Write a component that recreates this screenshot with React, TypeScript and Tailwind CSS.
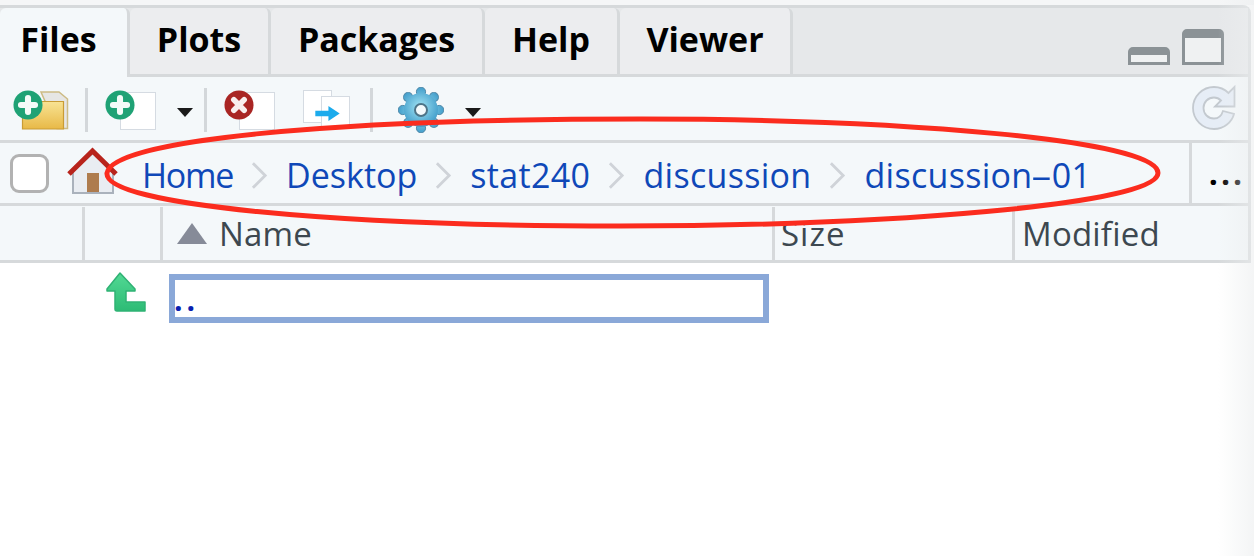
const tabs = [
  { label: "Files", width: "w-[130px] pr-[10px]", active: true },
  { label: "Plots", width: "w-[141px]" },
  { label: "Packages", width: "w-[214px]" },
  { label: "Help", width: "w-[135px]" },
  { label: "Viewer", width: "w-[173px]" },
];

const crumbs = [
  { label: "Home", track: "tracking-[-1.25px]" },
  { label: "Desktop", track: "tracking-[0px]" },
  { label: "stat240", track: "tracking-[0.35px]" },
  { label: "discussion", track: "tracking-[0.3px]" },
];

const Page = ({ className = "" }: { className?: string }) => (
  <div className={`absolute bg-white border border-[#d5dbe2] ${className}`} />
);

const PlusBadge = ({ className = "" }: { className?: string }) => (
  <svg viewBox="0 0 32 32" className={`absolute ${className}`}>
    <circle cx="16" cy="16" r="15.500" fill="#1fa275" />
    <path d="M16 8.500v15M8.500 16h15" stroke="#f4fbf8" strokeWidth="6.500" strokeLinecap="round" />
  </svg>
);

const Caret = () => (
  <svg viewBox="0 0 16 9" className="w-4 h-[9px] mt-[5px]">
    <path d="M0 0h16L8 9z" fill="#1a1a1a" />
  </svg>
);

const Sep = () => <div className="w-[3px] h-[44px] bg-[#d3d7da]" />;

const NewFolder = () => (
  <div className="relative w-[56px] h-[40px]">
    <svg viewBox="0 0 56 40" className="absolute inset-0 w-full h-full">
      <defs>
        <linearGradient id="folder" x1="0" y1="0" x2="0" y2="1">
          <stop offset="0" stopColor="#f8e394" />
          <stop offset="1" stopColor="#e8b947" />
        </linearGradient>
      </defs>
      <path d="M28 2 H46 L54.500 9 V38.500 H44z" fill="#e6e6e4" stroke="#cdbb84" strokeWidth="1.500" />
      <path d="M9.500 39 V11.500 H50.500 V39z" fill="url(#folder)" stroke="#c99c35" strokeWidth="1.200" />
    </svg>
    <PlusBadge className="left-0 top-0 w-[30px] h-[30px]" />
  </div>
);

const NewFile = () => (
  <div className="relative w-[51px] h-[40px]">
    <Page className="left-[15px] top-[2px] w-[36px] h-[38px]" />
    <PlusBadge className="left-0 top-0 w-[30px] h-[30px]" />
  </div>
);

const DeleteFile = () => (
  <div className="relative w-[51px] h-[40px]">
    <Page className="left-[15px] top-[2px] w-[36px] h-[38px]" />
    <svg viewBox="0 0 32 32" className="absolute left-0 top-0 w-[30px] h-[30px]">
      <circle cx="16" cy="16" r="15.500" fill="#a92523" />
      <path d="M10.500 10.500l11 11M21.500 10.500l-11 11" stroke="#f8eeee" strokeWidth="6" strokeLinecap="round" />
    </svg>
  </div>
);

const RenameFile = () => (
  <div className="relative w-[48px] h-[40px]">
    <Page className="left-0 top-0 w-[29px] h-[33px]" />
    <Page className="left-[18px] top-[6px] w-[29px] h-[33px]" />
    <svg viewBox="0 0 28 16" className="absolute left-[11px] top-[16px] w-[27px] h-[15px]">
      <path d="M1 5h14V0l12 8-12 8v-5H1z" fill="#1cabec" />
    </svg>
  </div>
);

const teeth = [0, 45, 90, 135, 180, 225, 270, 315];

const Gear = () => (
  <svg viewBox="0 0 46 46" className="w-[46px] h-[46px]">
    <defs>
      <radialGradient id="gear" gradientUnits="userSpaceOnUse" cx="22" cy="20" r="24">
        <stop offset="0" stopColor="#a2e4f4" />
        <stop offset="1" stopColor="#2f8fc2" />
      </radialGradient>
    </defs>
    {teeth.map((a) => (
      <circle key={a} cx="23" cy="4.800" r="4.600" fill="url(#gear)" stroke="#4f88a8" strokeWidth="1" transform={`rotate(${a} 23 23)`} />
    ))}
    <circle cx="23" cy="23" r="17" fill="url(#gear)" />
    <circle cx="23" cy="23" r="6" fill="#f4fafc" stroke="#4d7488" strokeWidth="2" />
  </svg>
);

const Refresh = () => (
  <svg viewBox="0 0 44 46" className="w-[44px] h-[46px] mb-[6px]">
    <path
      d="M22 3C10.500 3 1 12.500 1 24s9.500 21 21 21c10 0 18-7 20-15l-11-3c-1.500 5-5 7.500-9 7.500-6 0-10.500-4.500-10.500-10.500S16 13.500 22 13.500c3 0 5 1 7 3l-6 6h19.500V3l-6 6C32.500 5 27.500 3 22 3z"
      fill="#e6edf6"
      stroke="#c3c9cf"
      strokeWidth="1.800"
    />
  </svg>
);

const House = () => (
  <svg viewBox="0 0 52 48" className="w-[52px] h-[48px]">
    <path d="M6 24 L26 7 L46 24 V47 H6z" fill="#e9edf2" stroke="#aab2bc" strokeWidth="2" />
    <rect x="20" y="27" width="12" height="19" fill="#ae7c4e" />
    <path d="M2 28 L25.500 5 L49 28" fill="none" stroke="#b8241c" strokeWidth="5" />
  </svg>
);

const Chevron = () => (
  <svg viewBox="0 0 18 30" className="w-[17px] h-[29px] mx-[18px] shrink-0">
    <path d="M2 2l13 13L2 28" fill="none" stroke="#cfd3d8" strokeWidth="3" />
  </svg>
);

const UpArrow = () => (
  <svg viewBox="0 0 40 40" className="w-[40px] h-[40px]">
    <defs>
      <linearGradient id="up" x1="0" y1="0" x2="0" y2="1">
        <stop offset="0" stopColor="#52d994" />
        <stop offset="1" stopColor="#2dbb75" />
      </linearGradient>
    </defs>
    <path
      d="M14 1 L29 17 V19 H20 V30 H39 V39 H11 Q9 39 9 37 V19 H1 V17z"
      fill="url(#up)"
      stroke="#2fb274"
      strokeWidth="1.500"
      strokeLinejoin="round"
    />
  </svg>
);

const App = () => (
  <div className="relative w-[1254px] h-[556px] overflow-hidden bg-white font-['Open_Sans',sans-serif]">
    <div className="h-[5px] bg-[#f5f6f7]" />
    <div className="w-[1251px] rounded-tr-[8px] border-t-[3px] border-r-[3px] border-[#d6d9db]">
      <div className="flex h-[66px] items-stretch bg-[#e6e8ea]">
        {tabs.map((tab) => (
          <div
            key={tab.label}
            className={`${tab.width} flex items-center justify-center rounded-t-[6px] border-r-[3px] border-[#d6d9db] pb-[4px] text-[34px] font-bold text-black ${
              tab.active ? "bg-[#f4f8fa] h-[69px] pb-[7px] relative z-10" : "bg-[#ecedef] h-[66px]"
            }`}
          >
            {tab.label}
          </div>
        ))}
        <div className="flex flex-1 items-end justify-end gap-[12px] pb-[9px] pr-[24px]">
          <div className="w-[42px] h-[18px] rounded-t-[5px] border-[3px] border-t-[8px] border-[#8b9296] bg-[#eff1f2]" />
          <div className="w-[42px] h-[36px] rounded-t-[5px] border-[3px] border-t-[9px] border-[#8b9296] bg-[#eff1f2]" />
        </div>
      </div>

      <div className="flex h-[69px] items-center border-t-[3px] border-b-[3px] border-[#d6d9db] bg-[#f4f8fa] pl-[13px] pr-[12px] pt-[2px]">
        <NewFolder />
        <div className="ml-[16px] mr-[17px]"><Sep /></div>
        <NewFile />
        <div className="ml-[21px] mr-[11px]"><Caret /></div>
        <Sep />
        <div className="ml-[17px]"><DeleteFile /></div>
        <div className="ml-[28px]"><RenameFile /></div>
        <div className="ml-[19px] mr-[25px]"><Sep /></div>
        <Gear />
        <div className="ml-[21px]"><Caret /></div>
        <div className="ml-auto"><Refresh /></div>
      </div>

      <div className="flex h-[63px] items-center border-b-[3px] border-[#d6d9db] bg-[#f4f8fa]">
        <div className="ml-[10px] w-[39px] h-[39px] shrink-0 rounded-[9px] border-[3px] border-[#b2b2b2] bg-white" />
        <div className="ml-[18px] shrink-0 mb-[6px]"><House /></div>
        <div className="ml-[23px] flex flex-1 items-center text-[34px] text-[#0f48b8] pt-[4px]">
          {crumbs.map((c) => (
            <div key={c.label} className="flex items-center">
              <span className={c.track}>{c.label}</span>
              <Chevron />
            </div>
          ))}
          <span className="tracking-[0.3px]">
            discussion<span className="inline-block mx-[4px] scale-x-[2]">-</span>01
          </span>
        </div>
        <div className="flex h-full w-[59px] shrink-0 items-center justify-center border-l-[3px] border-[#d6d9db] pl-[14px] text-[32px] font-bold tracking-[3px] text-black">
          ...
        </div>
      </div>

      <div className="flex h-[57px] items-stretch border-b-[3px] border-[#d6d9db] bg-[#f4f8fa] pt-[1px] text-[33px] tracking-[0.2px] text-[#3d4850]">
        <div className="w-[85px] border-r-[3px] border-[#d6d9db]" />
        <div className="w-[78px] border-r-[3px] border-[#d6d9db]" />
        <div className="flex w-[612px] items-center gap-[12px] border-r-[3px] border-[#d6d9db] pl-[14px]">
          <svg viewBox="0 0 30 21" className="w-[30px] h-[21px]">
            <path d="M15 0l15 21H0z" fill="#868b98" />
          </svg>
          Name
        </div>
        <div className="flex w-[240px] items-center border-r-[3px] border-[#d6d9db] pl-[6px] tracking-[1px]">Size</div>
        <div className="flex flex-1 items-center pl-[7px]">Modified</div>
      </div>
    </div>

    <div className="flex items-start pt-[9px]">
      <div className="ml-[106px] w-[63px]"><UpArrow /></div>
      <div className="mt-[2px] flex w-[600px] h-[49px] items-end border-[6px] border-[#8aa8d8] bg-white text-[30px] font-bold leading-none tracking-[4px] text-[#0a1fb0]">
        <span className="mb-[2px] -ml-[1px]">..</span>
      </div>
    </div>

    {/* red ellipse marked by hand over the screenshot */}
    <svg viewBox="0 0 1254 556" className="absolute inset-0 w-[1254px] h-[556px] pointer-events-none">
      <path
        d="M107 173 C112 140 330 119 640 119 C900 119 1158 140 1158 173 C1158 205 880 226 620 226 C340 226 103 205 107 173z"
        fill="none"
        stroke="#fb2c1e"
        strokeWidth="5"
      />
    </svg>

    {/* soft fade at the right edge */}
    <div className="absolute right-0 top-0 h-full w-[36px] bg-gradient-to-r from-transparent to-[#eceeef] opacity-60 pointer-events-none" />
  </div>
);

export default App;
